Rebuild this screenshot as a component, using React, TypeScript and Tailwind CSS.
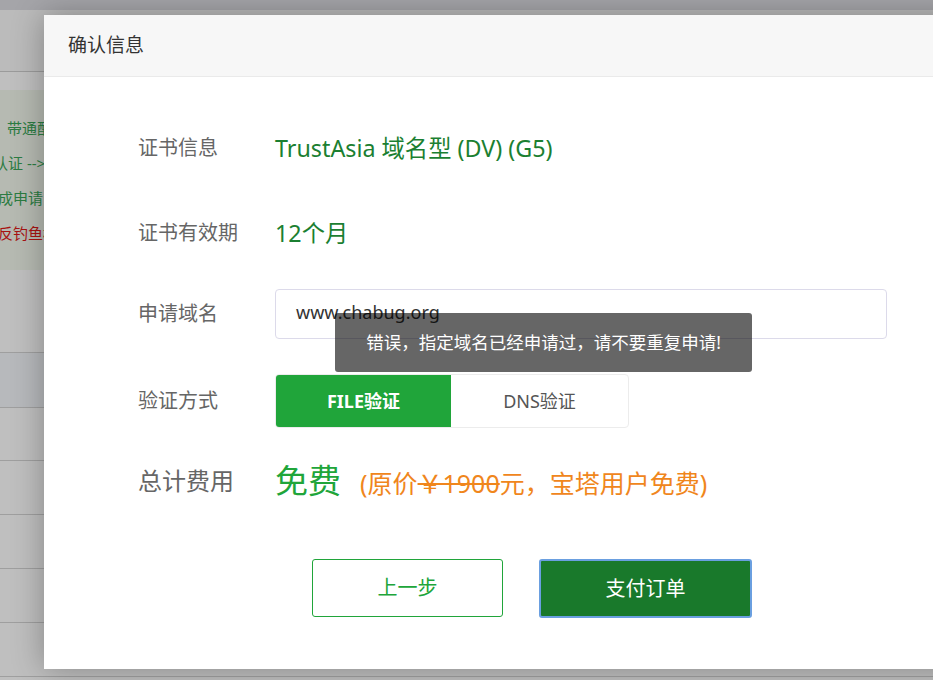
const rows = [
  { label: '证书信息', value: 'TrustAsia 域名型 (DV) (G5)' },
  { label: '证书有效期', value: '12个月' },
]

function BackPage() {
  return (
    <div className="w-[933px] h-[680px] bg-white">
      <div className="h-[10px] bg-[#dcdde2]" />
      <div className="h-[62px] border-b border-[#cfcfcf] bg-[#fafafa]" />
      <div className="h-[18px]" />
      <div className="h-[180px] bg-[#f3f8ee] pt-[21px] text-[15px] leading-[35px]">
        <div className="pl-[7px] text-[#3aa658] whitespace-nowrap">带通配符证书</div>
        <div className="-ml-[7px] text-[#3aa658] whitespace-nowrap">认证 --&gt;</div>
        <div className="-ml-[2px] text-[#3aa658] whitespace-nowrap">成申请</div>
        <div className="-ml-[2px] text-[#e01818] whitespace-nowrap">反钓鱼标</div>
      </div>
      <div className="h-[82px]" />
      <div className="h-[55px] border-t border-[#d4d4d4] bg-[#f5f7fb]" />
      <div className="h-[53px] border-t border-[#d4d4d4]" />
      <div className="h-[54px] border-t border-[#d4d4d4]" />
      <div className="h-[54px] border-t border-[#d4d4d4]" />
      <div className="h-[54px] border-t border-[#d4d4d4]" />
      <div className="h-[54px] border-t border-[#d4d4d4]" />
      <div className="h-[54px] border-t border-[#d4d4d4]" />
    </div>
  )
}

export default function App() {
  return (
    <div className="relative w-[933px] h-[680px] overflow-hidden font-['Noto_Sans','Noto_Sans_CJK_SC',sans-serif]">
      <BackPage />
      <div className="absolute inset-0 bg-black/25" />
      <div className="absolute left-[44px] top-[15px] w-[920px] h-[654px] bg-white shadow-[0_0_30px_rgba(0,0,0,0.3)]">
        <div className="h-[62px] bg-[#f7f7f7] border-b border-[#eaeaea] flex items-center pl-[24px] text-[19px] text-[#333]">
          确认信息
        </div>
        <div className="pl-[94px] pt-[43px]">
          {rows.map((r, i) => (
            <div key={r.label} className={`flex items-center h-[56px] ${i === 1 ? 'mt-[29px]' : ''}`}>
              <div className="w-[137px] text-[20px] text-[#666]">{r.label}</div>
              <div className="text-[23.3px] text-[#1b7f31]">{r.value}</div>
            </div>
          ))}
          <div className="flex items-center h-[50px] mt-[28px]">
            <div className="w-[137px] text-[20px] text-[#666]">申请域名</div>
            <div className="w-[612px] h-[50px] border border-[#dcdaea] rounded-[4px] flex items-center pl-[20px] pb-[4px] text-[18px] text-[#333]">
              www.chabug.org
            </div>
          </div>
          <div className="flex items-center h-[54px] mt-[35px]">
            <div className="w-[137px] text-[20px] text-[#666]">验证方式</div>
            <div className="flex h-[54px] w-[354px] border border-[#ececec] rounded-[4px] overflow-hidden">
              <div className="w-[175px] bg-[#20a53a] text-white font-bold text-[18px] flex items-center justify-center">
                FILE验证
              </div>
              <div className="flex-1 text-[#555] text-[18px] flex items-center justify-center">DNS验证</div>
            </div>
          </div>
          <div className="flex items-center h-[56px] mt-[25px]">
            <div className="w-[137px] text-[24px] text-[#666]">总计费用</div>
            <div className="text-[33px] text-[#20a53a]">免费</div>
            <div className="ml-[19px] text-[25px] text-[#f0861c] mt-[6px]">
              (原价<span className="line-through">￥1900</span>元，宝塔用户免费)
            </div>
          </div>
          <div className="flex mt-[50px] pl-[174px] gap-[36px]">
            <button className="w-[191px] h-[58px] border border-[#20a53a] rounded-[3px] text-[#20a53a] text-[20px] bg-white">
              上一步
            </button>
            <button className="w-[213px] h-[59px] border-2 border-[#6a9fe0] rounded-[3px] text-white text-[20px] bg-[#19792b]">
              支付订单
            </button>
          </div>
        </div>
      </div>
      <div className="absolute left-[335px] top-[313px] w-[417px] h-[59px] rounded-[3px] bg-black/60 flex items-center justify-center text-white text-[17.5px]">
        错误，指定域名已经申请过，请不要重复申请!
      </div>
    </div>
  )
}
